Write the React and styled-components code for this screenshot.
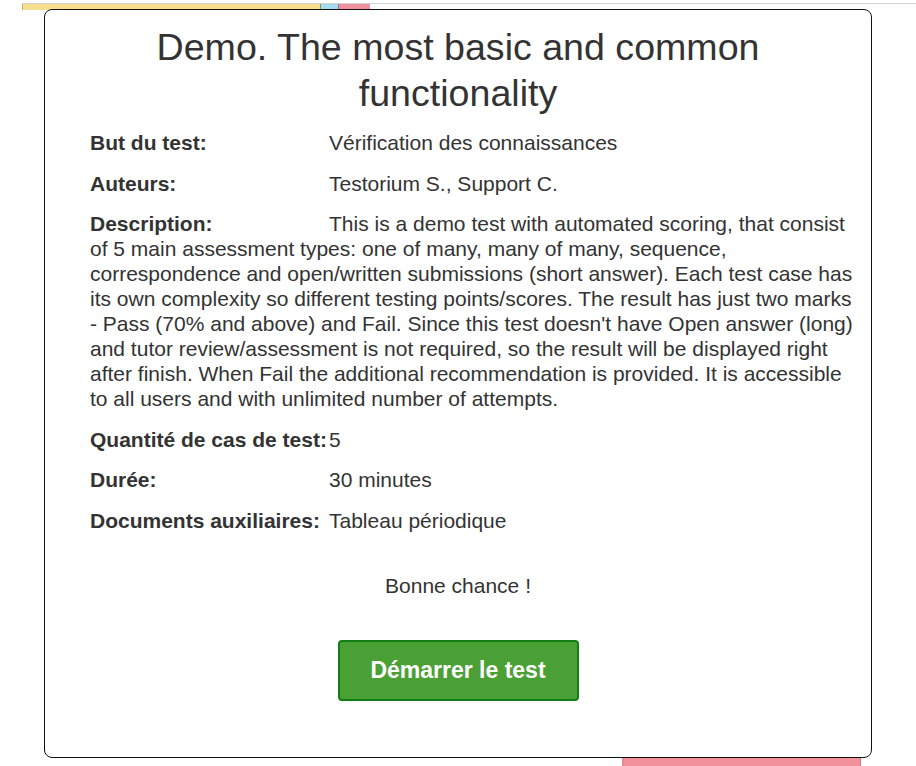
import React from "react";
import styled, { createGlobalStyle } from "styled-components";

const Global = createGlobalStyle`
  html, body { margin: 0; padding: 0; background: #fff; }
  body { font-family: "Liberation Sans", Arial, sans-serif; color: #333; }
  * { box-sizing: border-box; }
`;

const Page = styled.div`
  height: 766px;
  display: flex;
  flex-direction: column;
  justify-content: space-between;
  overflow: hidden;
`;

const TopStrip = styled.div`
  margin: 3px 0 0 22px;
  border-top: 1px solid #d2d2d2;
  display: flex;
  height: 7px;
`;

const Bar = styled.div`
  width: ${(p) => p.$w}px;
  background: ${(p) => p.$c};
  border-left: 1px solid ${(p) => p.$edge || "transparent"};
`;

const BottomStrip = styled.div`
  display: flex;
  padding-left: 622px;
  height: 9px;
`;

const BottomBar = styled.div`
  width: 239px;
  background: #f2909c;
  border-left: 2px solid #e88a96;
  border-right: 1px solid #d87884;
`;

const Modal = styled.div`
  position: fixed;
  left: 44px;
  top: 9px;
  width: 828px;
  height: 749px;
  background: #fff;
  border: 1px solid #111;
  border-radius: 8px;
  padding: 14px 18px 0 45px;
  display: flex;
  flex-direction: column;
`;

const Title = styled.h1`
  margin: 0 0 14px -27px;
  padding: 0 60px;
  font-size: 37.6px;
  line-height: 46px;
  font-weight: 400;
  text-align: center;
  color: #333;
`;

const InfoList = styled.div`
  display: flex;
  flex-direction: column;
  gap: 15.5px;
`;

const Row = styled.div`
  font-size: 21px;
  line-height: 25px;
  color: #333;
`;

const Label = styled.span`
  display: inline-block;
  width: 239px;
  font-weight: 700;
  white-space: nowrap;
`;

const Center = styled.div`
  margin: 40px 0 0 -27px;
  text-align: center;
  font-size: 21px;
  line-height: 25px;
`;

const ButtonWrap = styled.div`
  margin: 42px 0 0 -27px;
  display: flex;
  justify-content: center;
`;

const StartButton = styled.button`
  width: 241px;
  height: 61px;
  background: #4a9f35;
  border: 2px solid #127f14;
  border-radius: 4px;
  color: #fff;
  font-family: "Liberation Sans", Arial, sans-serif;
  font-size: 23px;
  font-weight: 700;
  cursor: pointer;
  padding: 0;
`;

const rows = [
  ["But du test:", "Vérification des connaissances"],
  ["Auteurs:", "Testorium S., Support C."],
  [
    "Description:",
    "This is a demo test with automated scoring, that consist of 5 main assessment types: one of many, many of many, sequence, correspondence and open/written submissions (short answer). Each test case has its own complexity so different testing points/scores. The result has just two marks - Pass (70% and above) and Fail. Since this test doesn't have Open answer (long) and tutor review/assessment is not required, so the result will be displayed right after finish. When Fail the additional recommendation is provided. It is accessible to all users and with unlimited number of attempts.",
  ],
  ["Quantité de cas de test:", "5"],
  ["Durée:", "30 minutes"],
  ["Documents auxiliaires:", "Tableau périodique"],
];

export default function App() {
  return (
    <>
      <Global />
      <Page>
        <TopStrip>
          <Bar $w={298} $c="#f8df8e" $edge="#c9b060" />
          <Bar $w={18} $c="#a3dcf0" $edge="#7a9a70" />
          <Bar $w={32} $c="#f0909c" $edge="#9a7d8a" />
        </TopStrip>
        <BottomStrip>
          <BottomBar />
        </BottomStrip>
      </Page>
      <Modal>
        <Title>Demo. The most basic and common functionality</Title>
        <InfoList>
          {rows.map(([l, v]) => (
            <Row key={l}>
              <Label>{l}</Label>
              {v}
            </Row>
          ))}
        </InfoList>
        <Center>Bonne chance !</Center>
        <ButtonWrap>
          <StartButton>Démarrer le test</StartButton>
        </ButtonWrap>
      </Modal>
    </>
  );
}
